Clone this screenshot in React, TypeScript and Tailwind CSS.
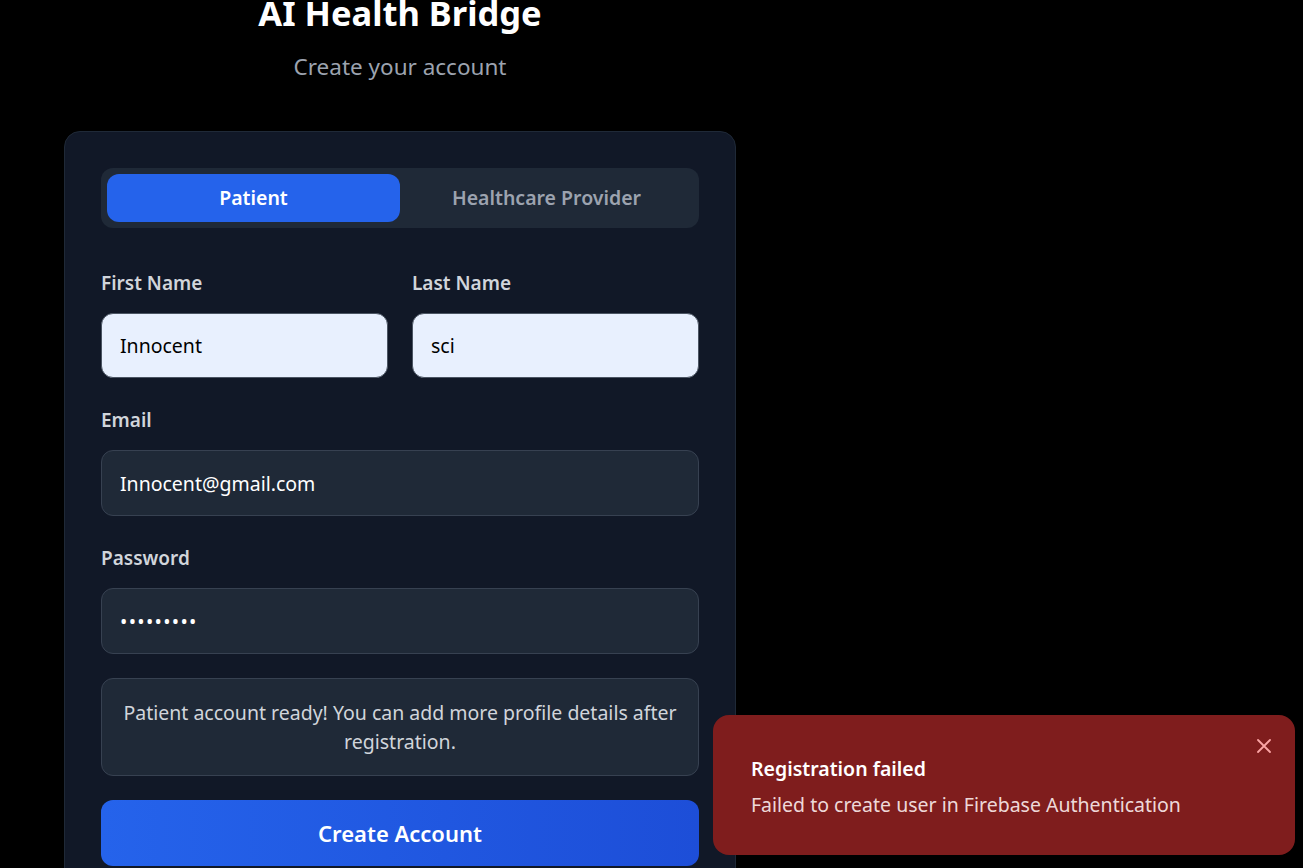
import React from "react";

export default function App() {
  return (
    <div
      className="relative min-h-screen overflow-hidden bg-black"
      style={{ fontFamily: '"Noto Sans", "Open Sans", sans-serif' }}
    >
      <div className="ml-16 mt-[-10px] w-[672px]">
        {/* Header */}
        <div className="text-center">
          <h1 className="text-[34.5px] font-bold leading-[45px] text-white">AI Health Bridge</h1>
          <p className="mt-[18px] text-[22.5px] leading-[28px] text-[#9ca3af]">Create your account</p>
        </div>

        {/* Card */}
        <div className="mt-[50px] rounded-2xl border border-[#1f2937] bg-[#111827] p-9 pb-20">
          {/* Role tabs */}
          <div className="grid grid-cols-2 rounded-xl bg-[#1f2937] p-1.5">
            <button className="h-12 rounded-xl bg-[#2563eb] text-[19.5px] font-semibold text-white">Patient</button>
            <button className="h-12 rounded-xl text-[19.5px] font-semibold text-[#9ca3af]">Healthcare Provider</button>
          </div>

          <div className="mt-[43px] grid grid-cols-2 gap-6">
            <div>
              <label className="block text-[19px] font-semibold leading-[25px] text-[#d1d5db]">First Name</label>
              <input
                readOnly
                value="Innocent"
                className="mt-[17px] h-[65px] w-full rounded-xl border border-[#4b5563] bg-[#e8f0fe] px-[18px] text-[19.5px] text-black outline-none"
              />
            </div>
            <div>
              <label className="block text-[19px] font-semibold leading-[25px] text-[#d1d5db]">Last Name</label>
              <input
                readOnly
                value="sci"
                className="mt-[17px] h-[65px] w-full rounded-xl border border-[#4b5563] bg-[#e8f0fe] px-[18px] text-[19.5px] text-black outline-none"
              />
            </div>
          </div>

          <div className="mt-[30px]">
            <label className="block text-[19px] font-semibold leading-[25px] text-[#d1d5db]">Email</label>
            <input
              readOnly
              value="Innocent@gmail.com"
              className="mt-[17px] h-[66px] w-full rounded-xl border border-[#374151] bg-[#1f2937] px-[18px] text-[19.5px] text-white outline-none"
            />
          </div>

          <div className="mt-[30px]">
            <label className="block text-[19px] font-semibold leading-[25px] text-[#d1d5db]">Password</label>
            <input
              readOnly
              type="password"
              value="123456789"
              className="mt-[17px] h-[66px] w-full rounded-xl border border-[#374151] bg-[#1f2937] px-[18px] text-[19.5px] tracking-[1.3px] text-white outline-none"
            />
          </div>

          <div className="mt-6 rounded-xl border border-[#374151] bg-[#1f2937] px-[18px] py-[19px] text-center text-[19.5px] leading-[29px] text-[#d1d5db]">
            Patient account ready! You can add more profile details after registration.
          </div>

          <button className="mt-6 h-[66px] w-full rounded-xl bg-gradient-to-r from-[#2563eb] to-[#1d4ed8] text-[22px] font-semibold text-white">
            Create Account
          </button>
        </div>
      </div>

      {/* Toast */}
      <div className="absolute left-[713px] top-[715px] h-[140px] w-[582px] rounded-2xl bg-[#7f1d1d] pl-[38px] pt-[40px]">
        <div className="text-[19.5px] font-semibold leading-[28px] text-white">Registration failed</div>
        <div className="mt-[8px] text-[19.5px] leading-[28px] text-[#fef2f2]/90">
          Failed to create user in Firebase Authentication
        </div>
        <button className="absolute right-[24px] top-[24px] text-[#fca5a5]">
          <svg width="14" height="14" viewBox="0 0 14 14" fill="none" stroke="currentColor" strokeWidth="1.8" strokeLinecap="round">
            <path d="M1 1l12 12M13 1L1 13" />
          </svg>
        </button>
      </div>
    </div>
  );
}
